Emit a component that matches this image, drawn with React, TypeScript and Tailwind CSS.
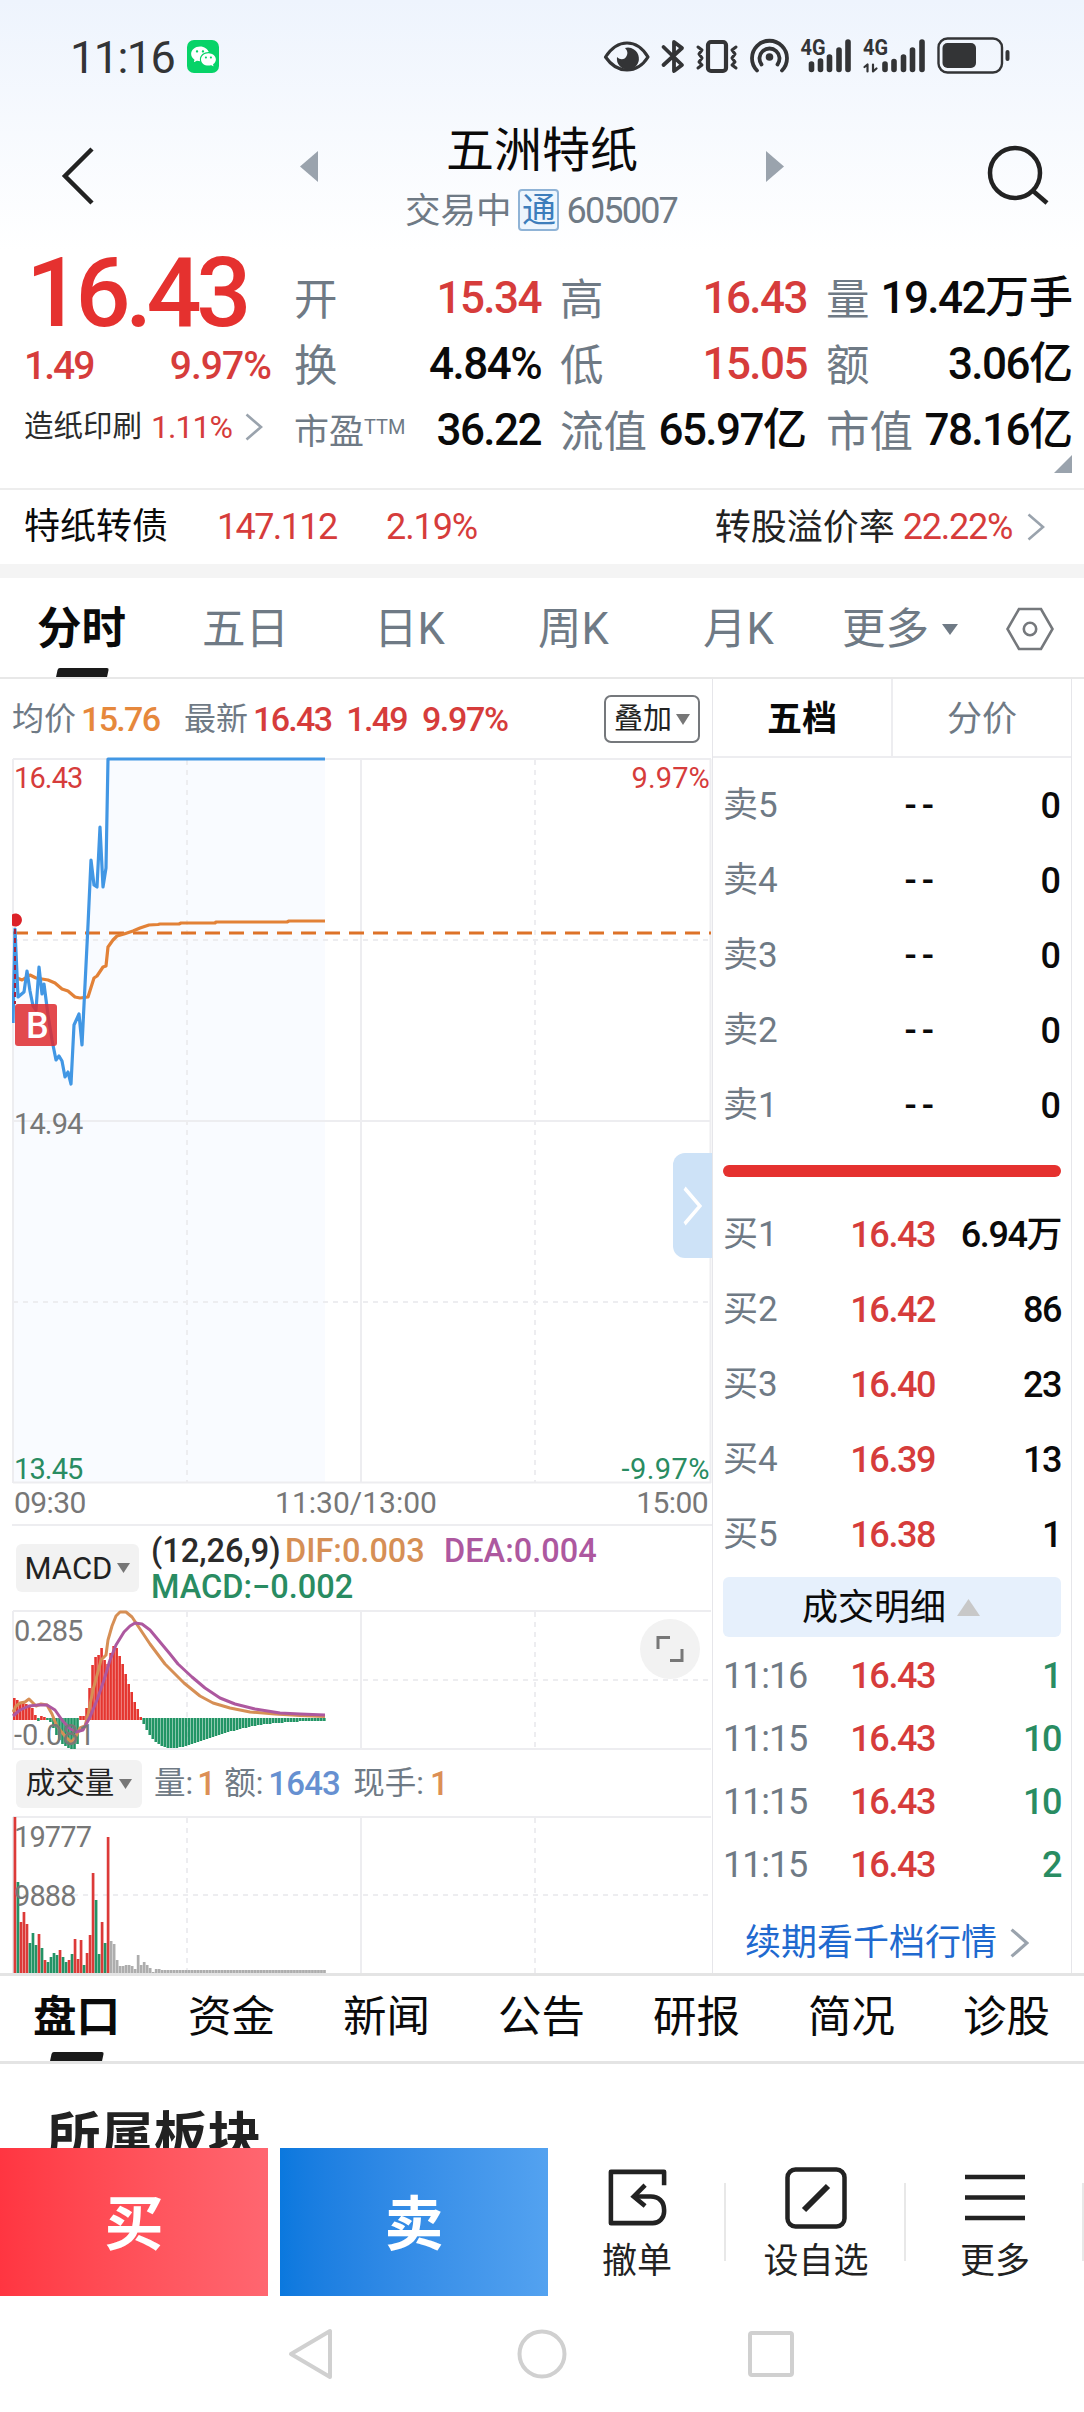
import React from 'react';
import { RiWechatFill } from 'react-icons/ri';

const INTRADAY =
  '13,1023 15,929 18,997 24,992 27,971 30,991 33,1006 36,1010 39,967 42,994 44,984 48,1015 52,1040 56,1060 59,1056 62,1061 65,1077 68,1072 71,1084 74,1025 79,1014 82,1045 85,985 88,925 91,860 94,885 97,887 100,827 103,887 106,868 108,759 325,759';
const AVERAGE =
  '17,978 22,980 27,977 30,975 36,978 48,980 55,983 62,989 68,991 75,997 80,998 88,997 94,978 97,976 103,967 106,966 108,947 113,940 117,936 124,934 133,931 140,928 149,925 158,924.5 160,924 179,924 181,923 215,923 216,922 287,922 289,921 325,921';
const DIF =
  '13,1712 16,1706 20,1703 25,1702 29,1699 33,1703 36,1706 41,1704 47,1705 52,1714 56,1724 60,1730 65,1736 71,1742 75,1738 80,1728 85,1726 88,1715 93,1690 99,1668 101,1660 106,1655 108,1640 112,1626 116,1616 120,1612 126,1612 132,1617 138,1626 150,1644 165,1664 184,1683 200,1696 213,1703 230,1708 250,1712 275,1714 300,1715.5 325,1716.5';
const DEA =
  '13,1716 20,1710 29,1706 38,1705 47,1705 55,1710 62,1720 69,1728 76,1732 83,1730 90,1717 97,1700 104,1680 110,1660 116,1645 124,1632 130,1626 135,1623 142,1624 150,1630 160,1642 170,1654 178,1664 192,1677 205,1688 220,1698 235,1704 255,1709 280,1713 300,1714 325,1715';

// one value per minute, above zero is red, below is green
const MACD_BARS = [
  22, 20, 18, 17, 16, 15, 12, 5, -3, 4, 3, -2, -4, -10, -17, -22, -26, -28, -30, -31, -31, -26, 4, 4, 12, 32, 55, 63, 65, 72,
  60, 56, 67, 74, 72, 64, 56, 46, 36, 28, 18, 11, 3, -6, -12, -17, -21, -24, -26, -28, -29, -30, -30, -30, -30, -29, -29, -28,
  -27, -26, -25, -24, -23, -22, -21, -20, -19, -18, -17, -16, -15, -14, -13, -13, -12, -11, -10, -10, -9, -8, -8, -7, -7, -6,
  -6, -6, -5, -5, -5, -5, -4, -4, -4, -4, -4, -3, -3, -3, -3, -3, -3, -3, -3, -3,
];

const VOLUME: [string, number][] = [
  ['r', 157], ['g', 92], ['r', 52], ['r', 62], ['r', 50], ['g', 31], ['g', 41], ['g', 29], ['r', 40], ['g', 26], ['r', 14],
  ['g', 12], ['g', 17], ['g', 21], ['g', 19], ['r', 24], ['g', 17], ['g', 12], ['r', 14], ['g', 20], ['r', 35], ['r', 15],
  ['r', 34], ['g', 9], ['r', 21], ['r', 39], ['r', 101], ['g', 74], ['g', 20], ['r', 52], ['g', 31], ['r', 137], ['n', 33],
  ['n', 30], ['n', 14], ['n', 8], ['n', 8], ['n', 9], ['n', 9], ['n', 8], ['n', 5], ['n', 19], ['n', 9], ['n', 12], ['n', 9],
  ['n', 6], ['n', 2], ['n', 5], ['n', 5], ['n', 4],
];
const BAR_FILL: Record<string, string> = { r: '#dc3a38', g: '#239366', n: '#adadad' };

const RED = 'text-[#d63c3b]';
const BLACK = 'text-[#0a0a0a]';

const QUOTES = [
  { label: '开', value: '15.34', color: RED },
  { label: '高', value: '16.43', color: RED },
  { label: '量', value: '19.42', unit: '万手', color: BLACK },
  { label: '换', value: '4.84%', color: BLACK },
  { label: '低', value: '15.05', color: RED },
  { label: '额', value: '3.06', unit: '亿', color: BLACK },
  { label: '市盈', value: '36.22', color: BLACK },
  { label: '流值', value: '65.97', unit: '亿', color: BLACK },
  { label: '市值', value: '78.16', unit: '亿', color: BLACK },
];

const BUYS = [
  ['买1', '16.43', '6.94万'],
  ['买2', '16.42', '86'],
  ['买3', '16.40', '23'],
  ['买4', '16.39', '13'],
  ['买5', '16.38', '1'],
];

const TRADES = [
  ['11:16', '1'],
  ['11:15', '10'],
  ['11:15', '10'],
  ['11:15', '2'],
];

const Chevron = ({ className, stroke = '#9aa3ad', width = 2.6 }: { className: string; stroke?: string; width?: number }) => (
  <svg className={className} viewBox="0 0 18 28" fill="none" preserveAspectRatio="none">
    <path d="M1.5 1.5 16 14 1.5 26.5" stroke={stroke} strokeWidth={width} />
  </svg>
);

const Caret = ({ className }: { className: string }) => (
  <svg className={className} viewBox="0 0 14 10" preserveAspectRatio="none">
    <path d="M0 0h14L7 10z" fill="currentColor" />
  </svg>
);

const StatusIcons = () => (
  <svg className="w-[412px] h-10" viewBox="600 36 412 40" fill="none" stroke="#333436" strokeLinecap="round" strokeLinejoin="round">
    <path d="M605.500 57C612 47 620 43 627 43s15 4 21 14c-6 9.500-14 13-21 13s-15-3.500-21.500-13z" strokeWidth="3.200" />
    <path d="M625 48a11 11 0 1 1-8 9c3 3 7 3 9 0s2-6-1-9z" fill="#333436" stroke="none" />
    <path d="M663.500 47 682 65 674 71V42l8 6-18.500 17" strokeWidth="3.800" />
    <rect x="708" y="42" width="18" height="29" rx="3" strokeWidth="4.200" />
    <path d="M698 47l4 3-3 4 3 4-3 4 3 3-4 3M736 47l-4 3 3 4-3 4 3 4-3 3 4 3" strokeWidth="3" />
    <path d="M757 70.500a17.500 17.500 0 1 1 25 0M761.500 64.500a10 10 0 1 1 16 0" strokeWidth="3.800" />
    <circle cx="769.500" cy="57" r="3.800" fill="#333436" stroke="none" />
    <path d="M811.500 64v5.500M820.500 61v8.500M829.500 57v12.500M839 50v19.500M848 42v27.500M885 64v5.500M894 61.500v8M903.500 57v12.500M912.500 50v19.500M922 42v27.500" strokeWidth="5.600" />
    <path d="M864.500 67l3-2.500v7M873 64.500v7l3.500-3" strokeWidth="2.200" />
    <text x="800.500" y="55" fill="#333436" stroke="none" fontSize="22" fontWeight="700" textLength="25" lengthAdjust="spacingAndGlyphs">4G</text>
    <text x="863" y="55" fill="#333436" stroke="none" fontSize="22" fontWeight="700" textLength="25" lengthAdjust="spacingAndGlyphs">4G</text>
    <rect x="938.500" y="38.500" width="63.500" height="34" rx="9" strokeWidth="2.400" />
    <rect x="942.500" y="43" width="33.500" height="25" rx="5" fill="#333436" stroke="none" />
    <path d="M1007.500 52v7" strokeWidth="4" />
  </svg>
);

const PriceChart = () => (
  <svg className="block w-[702px] h-[728px]" viewBox="12 757 702 728" fill="none">
    <polygon points={`${INTRADAY} 325,1482 13,1482`} fill="#f9fbff" />
    <g stroke="#ededf0" strokeWidth="2">
      <path d="M13 759H711M13 1121H711M13 1482.500H711M13 759V1483M361 759V1483M710.500 759V1483" />
      <path d="M187 760V1482M535 760V1482M13 940H708M13 1302H708" strokeDasharray="5 5" />
    </g>
    <path d="M13 933H711" stroke="#dd7228" strokeWidth="3" strokeDasharray="15 9" />
    <polyline points={AVERAGE} stroke="#e28137" strokeWidth="3.200" strokeLinejoin="round" />
    <polyline points={INTRADAY} stroke="#4297e4" strokeWidth="3.200" strokeLinejoin="round" />
    <path d="M15 929V1004" stroke="#a5233f" strokeWidth="2" strokeDasharray="5 4" />
    <path d="M12 914.500a6.500 6.500 0 1 1 0 11z" fill="#dc2228" />
    <rect x="15" y="1004" width="42" height="42" rx="3" fill="#de2c31" fillOpacity=".86" />
  </svg>
);

const MacdChart = () => (
  <svg className="block w-[702px] h-[140px]" viewBox="12 1610 702 140" fill="none">
    <g stroke="#ededf0" strokeWidth="2">
      <path d="M13 1611H711M13 1749H711M13 1611V1750M361 1611V1750" />
      <path d="M187 1612V1749M535 1612V1749M13 1680H708" strokeDasharray="5 5" />
    </g>
    {MACD_BARS.map((v, i) => (
      <rect
        key={i}
        x={13 + i * 3.01}
        y={v > 0 ? 1720 - v : 1718}
        width="2.6"
        height={Math.abs(v)}
        fill={v > 0 ? '#e5352f' : '#229565'}
      />
    ))}
    <polyline points={DIF} stroke="#d68f55" strokeWidth="3" strokeLinejoin="round" />
    <polyline points={DEA} stroke="#ad589f" strokeWidth="3" strokeLinejoin="round" />
  </svg>
);

const VolumeChart = () => (
  <svg className="block w-[702px] h-[158px]" viewBox="12 1816 702 158" fill="none">
    <g stroke="#ededf0" strokeWidth="2">
      <path d="M13 1817H711M13 1817V1974M361 1817V1974" />
      <path d="M187 1818V1974M535 1818V1974M13 1895H708" strokeDasharray="5 5" />
    </g>
    {Array.from({ length: 104 }, (_, i) => {
      const [kind, h] = VOLUME[i] ?? ['n', 4];
      return <rect key={i} x={13.6 + i * 3.005} y={1974 - h} width="2.7" height={h} fill={BAR_FILL[kind]} />;
    })}
  </svg>
);

const Header = () => (
  <div className="h-[250px] shrink-0 bg-gradient-to-b from-[#eef4fd] to-white">
    <div className="h-[112px] flex items-center justify-between pl-[70px] pr-[72px]">
      <div className="flex items-center">
        <span className="pt-[2px] text-[45px] leading-none text-[#333436] tracking-[-0.035em] w-[117px]">11:16</span>
        <span className="w-8 h-[33px] rounded-[7px] bg-[#07d368] flex items-center justify-center">
          <RiWechatFill className="w-[27px] h-[27px] text-white" />
        </span>
      </div>
      <StatusIcons />
    </div>
    <div className="h-[138px] flex justify-between pl-[60px] pr-[34px]">
      <svg className="w-9 h-[60px] mt-[34px]" viewBox="0 0 36 60" fill="none">
        <path d="M32 3 5 30l27 27" stroke="#222" strokeWidth="4.500" />
      </svg>
      <div className="flex w-[484px] ml-[2px] justify-between">
        <svg className="w-[18px] h-[31px] mt-[39px]" viewBox="0 0 18 31">
          <path d="M18 0v31L0 15.500z" fill="#9aa3ad" />
        </svg>
        <div className="flex flex-col items-center">
          <h1 className="mt-[15px] text-[48px] leading-[48px] text-[#0a0a0a]">五洲特纸</h1>
          <div className="-ml-[2px] mt-[14px] flex items-center text-[35.500px] leading-none text-[#6f7a85]">
            <span className="pt-[3px]">交易中</span>
            <span className="w-[41px] h-[42px] mx-[7px] border-2 border-[#8fb3d6] rounded-[4px] bg-[#edf5fd] text-[34px] text-[#3d7dbb] flex items-center justify-center">
              通
            </span>
            <span className="pt-[2px] text-[36px] tracking-[-0.05em]">605007</span>
          </div>
        </div>
        <svg className="w-[18px] h-[31px] mt-[39px]" viewBox="0 0 18 31">
          <path d="M0 0v31l18-15.500z" fill="#9aa3ad" />
        </svg>
      </div>
      <svg className="w-[64px] h-[60px] mt-[33px]" viewBox="0 0 64 60" fill="none" stroke="#222" strokeWidth="4.500">
        <circle cx="29" cy="28" r="25" />
        <path d="M46.500 45.500 61 58" />
      </svg>
    </div>
  </div>
);

const QuotePanel = () => (
  <div className="relative h-[238px] shrink-0 flex pl-6">
    <div className="w-[270px]">
      <div className="h-[83px] pt-[2px] pl-[2px] text-[97px] font-medium leading-[82px] tracking-[-0.057em] text-[#e5312f]">16.43</div>
      <div className={`h-[66px] pr-[23px] flex items-center justify-between text-[39px] font-medium leading-none ${RED}`}>
        <span className="tracking-[-0.05em]">1.49</span>
        <span className="tracking-[-0.025em]">9.97%</span>
      </div>
      <div className="h-[56px] flex items-center text-[29.5px] leading-none text-[#2b2b2b]">
        造纸印刷
        <span className={`ml-[9px] mr-[13px] text-[32px] tracking-[-0.03em] ${RED}`}>1.11%</span>
        <Chevron className="w-[18px] h-7" />
      </div>
    </div>
    <div className="mt-[15px] h-[198px] grid grid-cols-[247px_247px_247px] grid-rows-3 gap-x-[19px]">
      {QUOTES.map((q) => (
        <div key={q.label} className="flex items-center justify-between whitespace-nowrap leading-none">
          {q.label === '市盈' ? (
            <span className="flex pt-[5px] text-[35px] text-[#6f7a85]">
              市盈<sup className="text-[20px] top-0 leading-none mt-[2px]">TTM</sup>
            </span>
          ) : (
            <span className="pt-[5px] text-[43.5px] text-[#6f7a85]">{q.label}</span>
          )}
          <span className={`text-[44px] font-medium tracking-[-0.035em] ${q.color}`}>
            {q.value}
            {q.unit && <span className="tracking-normal">{q.unit}</span>}
          </span>
        </div>
      ))}
    </div>
    <svg className="absolute right-3 bottom-[15px] w-[18px] h-[18px]" viewBox="0 0 18 18">
      <path d="M18 0v18H0z" fill="#9aa3ad" />
    </svg>
  </div>
);

const BondRow = () => (
  <div className="h-[76px] shrink-0 border-t-2 border-[#ededed] flex items-center px-6 pr-[39px] pb-px text-[36px] leading-none text-[#0a0a0a]">
    <span className="w-[193px]">特纸转债</span>
    <span className={`w-[169px] tracking-[-0.045em] ${RED}`}>147.112</span>
    <span className={`tracking-[-0.03em] ${RED}`}>2.19%</span>
    <span className="ml-auto text-[#222] pt-[3px]">转股溢价率</span>
    <span className={`ml-2 mr-[15px] tracking-[-0.035em] ${RED}`}>22.22%</span>
    <Chevron className="w-[18px] h-7" />
  </div>
);

const PeriodTabs = () => (
  <div className="relative h-[101px] shrink-0 border-b-2 border-[#e8e8e8] pt-[3px] pl-[37px] flex items-center text-[43.5px] leading-none text-[#6f7a85] whitespace-nowrap">
    <span className="w-[165px] pt-px font-bold text-[44.500px] text-[#0a0a0a]">分时</span>
    <span className="w-[172px] pt-px">五日</span>
    <span className="w-[164px] pt-px">日K</span>
    <span className="w-[165px] pt-px">周K</span>
    <span className="w-[139px] pt-px">月K</span>
    <span className="w-[100px] pt-px">更多</span>
    <Caret className="w-4 h-[11px] text-[#6f7a85]" />
    <svg className="ml-[48px] w-[48px] h-[44px]" viewBox="0 0 48 44" fill="none" stroke="#75787c" strokeWidth="2.600">
      <path d="M13 2h22l11.500 20L35 42H13L1.500 22z" />
      <circle cx="24" cy="22" r="6.200" />
    </svg>
    <span className="absolute left-[57px] bottom-0 w-[51px] h-[9px] bg-[#1a1a1a] -skew-x-12 rounded-t-[2px]" />
  </div>
);

const ChartColumn = () => (
  <div className="w-[713px] pl-3 border-r border-[#e6e6ea] leading-none">
    <div className="h-[78px] flex items-center pt-[2px] pr-3 text-[32px] text-[#6f7a85] whitespace-nowrap">
      均价
      <span className="ml-[5px] w-[103px] text-[34px] font-medium tracking-[-0.05em] text-[#e6883c]">15.76</span>
      最新
      <span className={`ml-[5px] text-[34px] font-medium tracking-[-0.05em] flex gap-[15px] ${RED}`}>
        <span>16.43</span>
        <span>1.49</span>
        <span className="tracking-[-0.04em]">9.97%</span>
      </span>
      <span className="ml-auto w-[96px] h-12 border-2 border-[#75787c] rounded-[7px] flex items-center justify-center gap-1 text-[29px] text-[#222]">
        叠加
        <Caret className="w-[14px] h-[11px] text-[#777]" />
      </span>
    </div>

    <div className="relative text-[29px] tracking-[-0.03em] text-[#777]">
      <PriceChart />
      <span className={`absolute left-[2px] top-[7px] ${RED}`}>16.43</span>
      <span className={`absolute right-[2px] top-[7px] tracking-[0.005em] ${RED}`}>9.97%</span>
      <span className="absolute left-[2px] top-[353px]">14.94</span>
      <span className="absolute left-[2px] top-[698px] text-[#298c62]">13.45</span>
      <span className="absolute right-[2px] top-[698px] tracking-[0.015em] text-[#298c62]">-9.97%</span>
      <span className="absolute left-[14px] top-[251px] w-9 text-[36px] font-medium text-white">B</span>
      <div className="absolute right-0 top-[396px] w-[39px] h-[105px] rounded-l-[12px] bg-[#cde2f7] flex items-center justify-center">
        <Chevron className="w-[19px] h-10" stroke="#fff" width={3} />
      </div>
    </div>

    <div className="h-[41px] flex items-center justify-between pl-[2px] pr-[4px] pb-[4px] border-b-2 border-[#ededf0] text-[30px] tracking-[-0.02em] text-[#777]">
      <span>09:30</span>
      <span className="mr-[10px] tracking-normal">11:30/13:00</span>
      <span>15:00</span>
    </div>

    <div className="h-[84px] flex items-center pl-1 whitespace-nowrap">
      <span className="w-[123px] h-12 rounded-md bg-[#f2f2f2] flex items-center justify-center gap-[5px] text-[31px] text-[#222]">
        MACD
        <Caret className="w-[13px] h-[10px] text-[#777]" />
      </span>
      <div className="ml-3 pt-px text-[32.5px] leading-[36px] font-medium">
        <div className="flex">
          <span className="w-[134px] text-[#2b2b2b]">(12,26,9)</span>
          <span className="w-[159px] text-[#d68f55]">DIF:0.003</span>
          <span className="text-[#ad589f]">DEA:0.004</span>
        </div>
        <div className="text-[#298c62]">MACD:−0.002</div>
      </div>
    </div>

    <div className="relative text-[29px] tracking-[-0.03em] text-[#777]">
      <MacdChart />
      <span className="absolute left-[2px] top-[7px]">0.285</span>
      <span className="absolute left-[2px] top-[111px] tracking-normal">-0.081</span>
      <div className="absolute left-[628px] top-[9px] w-[60px] h-[60px] rounded-full bg-[#f2f2f2] flex items-center justify-center">
        <svg className="w-7 h-7" viewBox="0 0 28 28" fill="none" stroke="#777" strokeWidth="3">
          <path d="M2 14V2.500h12M26 14v11.500H14" />
        </svg>
      </div>
    </div>

    <div className="h-[66px] flex items-center pl-1 pt-px text-[31.5px] text-[#6f7a85] whitespace-nowrap">
      <span className="w-[126px] h-12 mr-3 rounded-md bg-[#f2f2f2] flex items-center justify-center gap-[5px] text-[29.5px] text-[#222]">
        成交量
        <Caret className="w-[13px] h-[10px] text-[#777]" />
      </span>
      <span>量:</span>
      <span className="w-[31px] pl-1 text-[33px] font-medium text-[#dc8f55]">1</span>
      <span>额:</span>
      <span className="w-[90px] pl-[5px] text-[33px] font-medium tracking-[-0.025em] text-[#6690d1]">1643</span>
      <span>现手:</span>
      <span className="pl-[6px] text-[33px] font-medium text-[#dc8f55]">1</span>
    </div>

    <div className="relative text-[29px] tracking-[-0.03em] text-[#777]">
      <VolumeChart />
      <span className="absolute left-[2px] top-[7px]">19777</span>
      <span className="absolute left-[2px] top-[66px]">9888</span>
    </div>
  </div>
);

const OrderBook = () => (
  <div className="w-[359px] border-r border-[#e6e6ea] leading-none">
    <div className="h-[79px] flex border-b-2 border-[#ededf0] text-[35px]">
      <span className="w-[180px] pt-[3px] border-r-2 border-[#ededf0] flex items-center justify-center font-bold text-[#0a0a0a]">五档</span>
      <span className="flex-1 pt-[3px] flex items-center justify-center text-[#6f7a85]">分价</span>
    </div>
    <div className="px-[10px]">
      <div className="pt-[10px]">
        {[5, 4, 3, 2, 1].map((n) => (
          <div key={n} className="h-[75px] flex items-center text-[36px]">
            <span className="w-[120px] text-[35px] text-[#6f7a85]">卖{n}</span>
            <span className="w-[96px] text-right tracking-[0.14em] font-medium text-[#0a0a0a]">--</span>
            <span className="flex-1 text-right font-medium text-[#0a0a0a]">0</span>
          </div>
        ))}
      </div>
      <div className="mt-[22px] h-3 rounded-full bg-[#e5312f]" />
      <div className="mt-5">
        {BUYS.map(([label, price, qty]) => (
          <div key={label} className="h-[75px] flex items-center text-[36px] font-medium tracking-[-0.04em] whitespace-nowrap">
            <span className="w-[120px] text-[35px] font-normal tracking-normal text-[#6f7a85]">{label}</span>
            <span className={`w-[92px] text-right ${RED}`}>{price}</span>
            <span className="flex-1 text-right text-[#0a0a0a]">{qty}</span>
          </div>
        ))}
      </div>
      <div className="mt-[5px] mb-[7px] h-[60px] rounded-md bg-[#e6f0fc] flex items-center justify-center gap-[11px] pr-[2px] text-[36px] text-[#0a0a0a]">
        <span className="pt-[2px]">成交明细</span>
        <svg className="w-[23px] h-[17px]" viewBox="0 0 23 17">
          <path d="M11.500 0 23 17H0z" fill="#c8c8c8" />
        </svg>
      </div>
      {TRADES.map(([time, qty], i) => (
        <div key={i} className="h-[63px] flex items-center text-[36px] font-medium tracking-[-0.04em]">
          <span className="w-[120px] font-normal tracking-[-0.03em] text-[#6f7a85]">{time}</span>
          <span className={`w-[92px] text-right ${RED}`}>16.43</span>
          <span className="flex-1 text-right text-[#298c62]">{qty}</span>
        </div>
      ))}
      <div className="h-[76px] pt-[18px] pl-[22px] flex items-center text-[36px] text-[#2069cf]">
        续期看千档行情
        <Chevron className="ml-[13px] w-[19px] h-[30px]" width={3} />
      </div>
    </div>
  </div>
);

const InfoTabs = () => (
  <div className="relative h-[91px] shrink-0 border-y-[3px] border-[#e4e4e4] pl-[33px] flex text-[43.5px] leading-[83px] text-[#0a0a0a]">
    {['盘口', '资金', '新闻', '公告', '研报', '简况', '诊股'].map((t, i) => (
      <span key={t} className={i === 0 ? 'w-[155px] shrink-0 font-bold' : 'w-[155px] shrink-0'}>
        {t}
      </span>
    ))}
    <span className="absolute left-[51px] bottom-0 w-[52px] h-[9px] bg-[#1a1a1a] -skew-x-12 rounded-t-[2px]" />
  </div>
);

const ActionBar = () => (
  <div className="h-[148px] shrink-0 flex text-[35px] leading-none text-[#222]">
    <button className="w-[268px] pt-1 bg-gradient-to-r from-[#ff3541] to-[#ff6670] text-white text-[59px] font-bold">买</button>
    <button className="ml-3 w-[268px] pt-1 bg-gradient-to-r from-[#0a78de] to-[#53a2f0] text-white text-[59px] font-bold">卖</button>
    <div className="w-[176px] pl-[2px] flex flex-col items-center">
      <svg className="mt-[21px] w-[59px] h-[57px]" viewBox="0 0 62 60" fill="none" stroke="#222" strokeWidth="4.800">
        <path d="M59 17V3H3v54h44a12 12 0 0 0 12-12V43c0-9-6-14-14-14H28" strokeLinejoin="round" />
        <path d="M39 17 27 29l12 10" />
      </svg>
      <span className="mt-[18px]">撤单</span>
    </div>
    <div className="my-[35px] w-[180px] border-l-2 border-[#e8e8e8]">
      <div className="-mt-4 pl-[2px] flex flex-col items-center">
        <svg className="w-[62px] h-[62px]" viewBox="0 0 62 62" fill="none" stroke="#222" strokeWidth="4.500">
          <rect x="2.500" y="2.500" width="57" height="57" rx="8" />
          <path d="M19 43 43 19" strokeWidth="6" />
        </svg>
        <span className="mt-[15px]">设自选</span>
      </div>
    </div>
    <div className="my-[35px] flex-1 border-x-2 border-[#e8e8e8]">
      <div className="-mt-4 pl-[2px] flex flex-col items-center">
        <svg className="w-[60px] h-[62px]" viewBox="0 0 60 62" stroke="#222" strokeWidth="4.500">
          <path d="M0 10H60M0 30.500H60M0 51H60" />
        </svg>
        <span className="mt-[15px]">更多</span>
      </div>
    </div>
  </div>
);

const App: React.FC = () => (
  <div className="w-[1084px] h-[2412px] overflow-hidden bg-white flex flex-col font-['Roboto','Noto_Sans_CJK_SC',sans-serif]">
    <Header />
    <QuotePanel />
    <BondRow />
    <div className="h-[14px] shrink-0 bg-[#f4f4f4]" />
    <PeriodTabs />
    <div className="h-[1294px] shrink-0 flex">
      <ChartColumn />
      <OrderBook />
    </div>
    <InfoTabs />
    <div className="h-[84px] shrink-0 overflow-hidden pl-[47px] pt-[47px] text-[53.5px] leading-[54px] font-bold text-[#222]">所属板块</div>
    <ActionBar />
    <div className="flex-1 flex items-center pl-[287px]">
      <svg className="w-[46px] h-[54px]" viewBox="0 0 46 54" fill="none" stroke="#d0d0d0" strokeWidth="4">
        <path d="M43 4v46L4 27z" strokeLinejoin="round" />
      </svg>
      <svg className="ml-[184px] w-[50px] h-[50px]" viewBox="0 0 50 50" fill="none" stroke="#d0d0d0" strokeWidth="4">
        <circle cx="25" cy="25" r="22.500" />
      </svg>
      <svg className="ml-[181px] w-[46px] h-[46px]" viewBox="0 0 46 46" fill="none" stroke="#d0d0d0" strokeWidth="4">
        <rect x="2" y="2" width="42" height="42" rx="2" />
      </svg>
    </div>
  </div>
);

export default App;
